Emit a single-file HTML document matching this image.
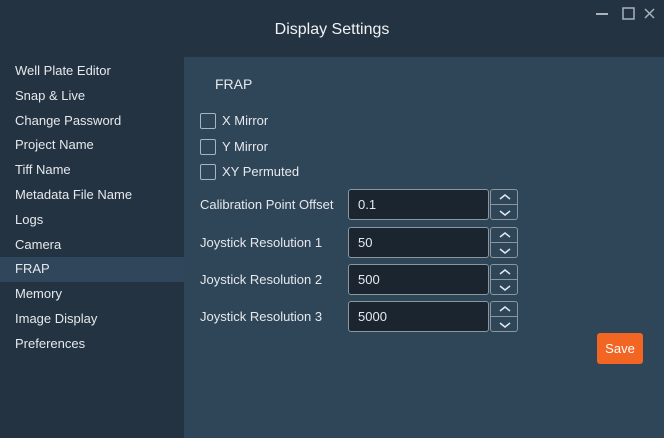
<!DOCTYPE html>
<html><head><style>
body{margin:0;width:664px;height:438px;background:#243342;font-family:"Liberation Sans",sans-serif;color:#e6e9ec;position:relative;overflow:hidden}
.t{position:absolute;left:0;width:664px;top:21px;text-align:center;font-size:16px;color:#f0f2f4}
.nav{position:absolute;left:0;top:59px;width:184px}
.nav div{height:24.8px;line-height:24.8px;padding-left:15px;font-size:13px}
.nav .s{background:#30465a}
.panel{position:absolute;left:184px;top:57px;right:0;bottom:0;background:#2f4558}
.a{position:absolute;font-size:13px}
.cb{position:absolute;width:14px;height:14px;border:1px solid #aab4bd;border-radius:2px;left:200px}
.in{position:absolute;left:348px;background:#1b2530;border:1px solid #8b969f;border-radius:3px;font-size:13px;line-height:29px;padding-left:9px;box-sizing:border-box;width:141px;height:31px}
.sp{position:absolute;left:490px;width:28px;height:31px;border:1px solid #8b969f;border-radius:3px;box-sizing:border-box}
.sp:after{content:"";position:absolute;left:0;right:0;top:14px;border-top:1px solid #8b969f}
.sp svg{position:absolute;left:7px}
</style></head><body>
<div class="t">Display Settings</div>
<svg style="position:absolute;left:596px;top:6px" width="60" height="16"><path d="M0 8h12" stroke="#aab2ba" stroke-width="2"/><rect x="27" y="2" width="11" height="11" fill="none" stroke="#aab2ba" stroke-width="1.5"/><path d="M49 3l9 9M58 3l-9 9" stroke="#aab2ba" stroke-width="1.5"/></svg>
<div class="nav">
<div>Well Plate Editor</div><div>Snap &amp; Live</div><div>Change Password</div><div>Project Name</div><div>Tiff Name</div><div>Metadata File Name</div><div>Logs</div><div>Camera</div><div class="s">FRAP</div><div>Memory</div><div>Image Display</div><div>Preferences</div>
</div>
<div class="panel"></div>
<div class="a" style="left:215px;top:76px;font-size:14px">FRAP</div>
<div class="cb" style="top:113px"></div><div class="a" style="left:222px;top:113px">X Mirror</div>
<div class="cb" style="top:139px"></div><div class="a" style="left:222px;top:139px">Y Mirror</div>
<div class="cb" style="top:164px"></div><div class="a" style="left:222px;top:164px">XY Permuted</div>
<div class="a" style="left:200px;top:197px">Calibration Point Offset</div>
<div class="a" style="left:200px;top:235px">Joystick Resolution 1</div>
<div class="a" style="left:200px;top:272px">Joystick Resolution 2</div>
<div class="a" style="left:200px;top:309px">Joystick Resolution 3</div>
<div class="in" style="top:189px">0.1</div>
<div class="in" style="top:227px">50</div>
<div class="in" style="top:264px">500</div>
<div class="in" style="top:301px">5000</div>
<div class="sp" style="top:189px"><svg width="14" height="31"><path d="M2 9l5-4 5 4M2 21l5 4 5-4" fill="none" stroke="#e6e9ec" stroke-width="1.5"/></svg></div>
<div class="sp" style="top:227px"><svg width="14" height="31"><path d="M2 9l5-4 5 4M2 21l5 4 5-4" fill="none" stroke="#e6e9ec" stroke-width="1.5"/></svg></div>
<div class="sp" style="top:264px"><svg width="14" height="31"><path d="M2 9l5-4 5 4M2 21l5 4 5-4" fill="none" stroke="#e6e9ec" stroke-width="1.5"/></svg></div>
<div class="sp" style="top:301px"><svg width="14" height="31"><path d="M2 9l5-4 5 4M2 21l5 4 5-4" fill="none" stroke="#e6e9ec" stroke-width="1.5"/></svg></div>
<div style="position:absolute;left:597px;top:333px;width:46px;height:31px;background:#f26522;border-radius:3px;color:#fff;font-size:13px;line-height:31px;text-align:center">Save</div>
</body></html>
